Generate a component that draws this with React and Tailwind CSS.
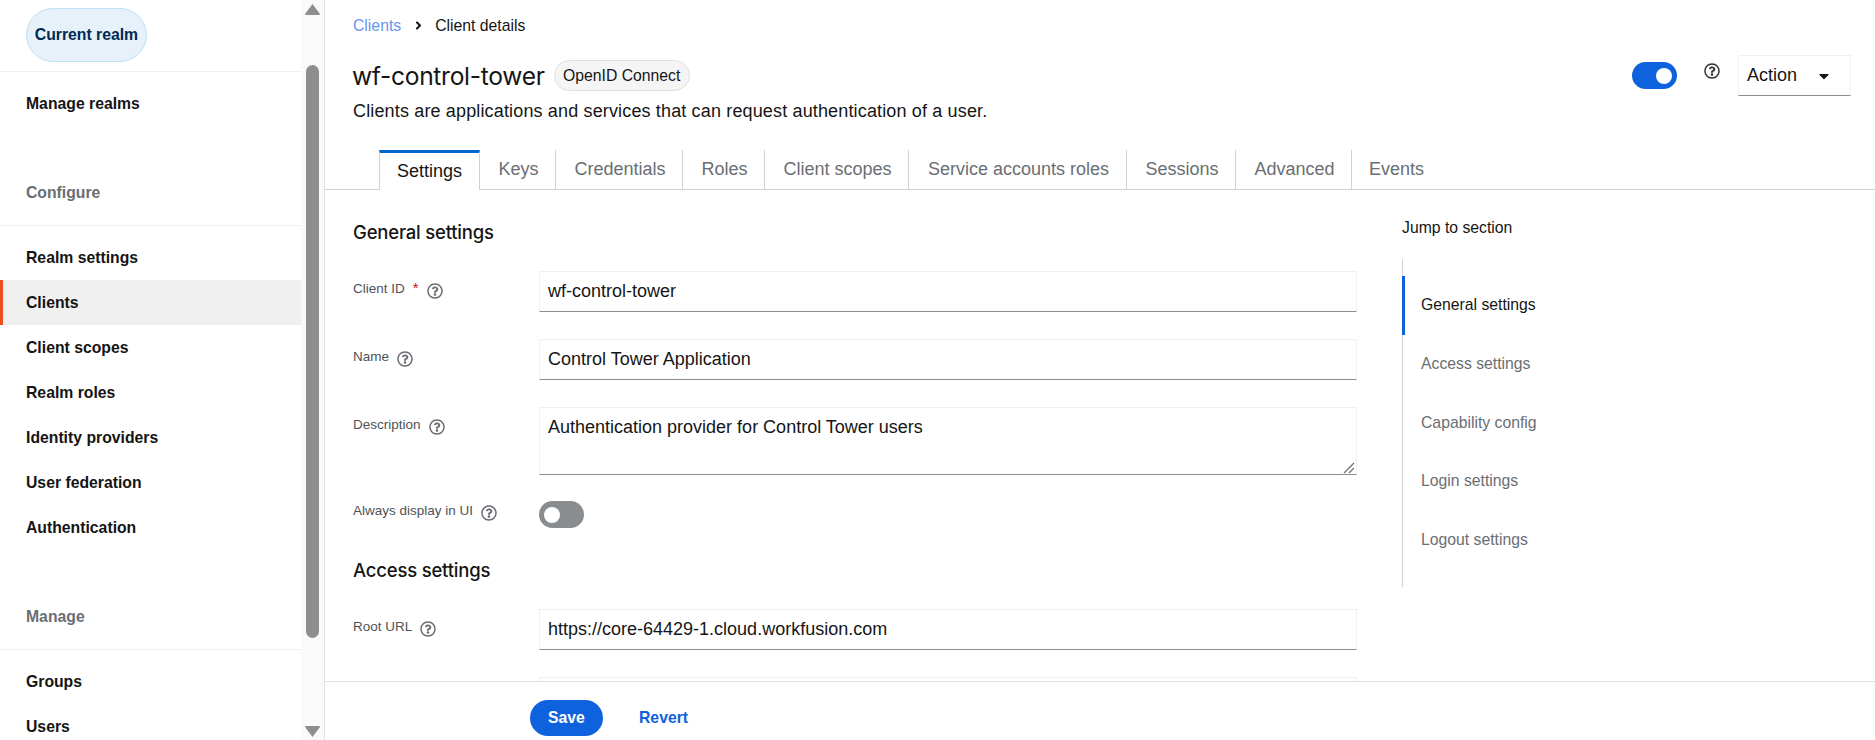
import React from "react";
import { FaRegQuestionCircle, FaAngleRight, FaCaretDown } from "react-icons/fa";

const sans = "font-['Liberation_Sans',Arial,sans-serif]";

const NavItem = ({ label, active }) => (
  <div
    className={`h-[45px] shrink-0 flex items-center text-[15.75px] font-bold text-[#151515] ${
      active ? "bg-[#f0f0f0] border-l-[3px] border-[#ee4d1c] pl-[23px]" : "pl-[26px]"
    }`}
  >
    {label}
  </div>
);

const NavHeading = ({ label }) => (
  <div className="shrink-0 pl-[26px] pb-[22px] leading-[20px] text-[15.75px] font-bold text-[#6a6e73] border-b border-[#f0f0f0]">
    {label}
  </div>
);

const Help = ({ className = "" }) => (
  <FaRegQuestionCircle className={`w-[16px] h-[16px] text-[#6a6e73] ${className}`} />
);

const Sidebar = () => (
  <div className="w-[325px] shrink-0 flex border-r border-[#e0e0e0] h-full overflow-hidden">
    <aside className="w-[301px] shrink-0 flex flex-col">
      <div className="h-[72px] shrink-0 pt-[8px] pl-[26px] border-b border-[#f0f0f0]">
        <div className="w-[121px] h-[54px] rounded-full border border-[#bee1f4] bg-[#e7f1fa] flex items-center justify-center text-[15.75px] font-bold text-[#002952]">
          Current realm
        </div>
      </div>
      <div className="h-[63px] shrink-0 flex items-center pl-[26px] text-[15.75px] font-bold text-[#151515]">
        Manage realms
      </div>
      <div className="h-[48px] shrink-0" />
      <NavHeading label="Configure" />
      <div className="h-[9px] shrink-0" />
      <NavItem label="Realm settings" />
      <NavItem label="Clients" active />
      <NavItem label="Client scopes" />
      <NavItem label="Realm roles" />
      <NavItem label="Identity providers" />
      <NavItem label="User federation" />
      <NavItem label="Authentication" />
      <div className="h-[57px] shrink-0" />
      <NavHeading label="Manage" />
      <div className="h-[9px] shrink-0" />
      <NavItem label="Groups" />
      <NavItem label="Users" />
    </aside>
    <div className="w-[23px] shrink-0 bg-[#fafafa] flex flex-col items-center">
      <svg width="15" height="11" viewBox="0 0 15 11" className="mt-[4px] shrink-0">
        <path d="M7.5 0 L15 10 Q15 11 14 11 L1 11 Q0 11 0 10 Z" fill="#8e8e8e" />
      </svg>
      <div className="w-[13px] h-[573px] mt-[50px] shrink-0 rounded-full bg-[#8e8e8e]" />
      <svg width="15" height="11" viewBox="0 0 15 11" className="mt-auto mb-[3px] shrink-0">
        <path d="M7.5 11 L15 1 Q15 0 14 0 L1 0 Q0 0 0 1 Z" fill="#8e8e8e" />
      </svg>
    </div>
  </div>
);

const tabs = [
  { label: "Settings", w: "w-[101px]", active: true },
  { label: "Keys", w: "w-[75px]" },
  { label: "Credentials", w: "w-[127px]" },
  { label: "Roles", w: "w-[82px]" },
  { label: "Client scopes", w: "w-[144px]" },
  { label: "Service accounts roles", w: "w-[218px]" },
  { label: "Sessions", w: "w-[109px]" },
  { label: "Advanced", w: "w-[116px]" },
  { label: "Events", w: "w-[88px]" },
];

const Tabs = () => (
  <div className="h-[40px] mt-[41px] pl-[54px] flex border-b border-[#d2d2d2] shrink-0">
    {tabs.map((t, i) =>
      t.active ? (
        <div
          key={t.label}
          className={`${t.w} h-[40px] flex items-center justify-center text-[18px] text-[#151515] bg-white border-t-[3px] border-t-[#0066cc] border-l border-r border-[#d2d2d2]`}
        >
          {t.label}
        </div>
      ) : (
        <div
          key={t.label}
          className={`${t.w} h-[39px] flex items-center justify-center pl-[2px] text-[18px] text-[#6a6e73] ${
            i > 1 ? "border-l border-[#d2d2d2]" : ""
          }`}
        >
          {t.label}
        </div>
      )
    )}
  </div>
);

const Field = ({ label, required, value, gap = "mb-[27px]", labelTop = "pt-[9px]", tall }) => (
  <div className={`flex ${gap}`}>
    <div className={`w-[186px] shrink-0 flex items-start gap-[9px] text-[13.5px] leading-[18px] text-[#4f5255] ${labelTop}`}>
      <span>{label}</span>
      {required && <span className="text-[#c9190b] -ml-[1px] text-[15px] leading-[16px]">*</span>}
      <Help className="mt-[3px] -ml-[1px]" />
    </div>
    <div
      className={`relative flex-1 ${tall ? "h-[68px] pt-[6px] items-start" : "h-[41px] items-center"} flex px-[8px] text-[18px] text-[#151515] border border-[#f0f0f0] border-b-[#8a8d90]`}
    >
      {value}
      {tall && (
        <svg width="12" height="12" viewBox="0 0 12 12" className="absolute right-[1px] bottom-0">
          <path d="M1 11 L11 1 M6 11 L11 6" stroke="#6a6e73" strokeWidth="1.2" />
        </svg>
      )}
    </div>
  </div>
);

const Heading = ({ children }) => (
  <h2 className="font-['Inter',sans-serif] text-[18.5px] font-medium text-[#151515] leading-[26px] tracking-[-0.2px]">
    {children}
  </h2>
);

const jump = ["General settings", "Access settings", "Capability config", "Login settings", "Logout settings"];

const JumpLinks = () => (
  <div className="w-[300px] ml-[45px] shrink-0 pt-[28px]">
    <div className="text-[15.75px] leading-[20px] text-[#151515] h-[41px]">Jump to section</div>
    <div className="border-l border-[#d2d2d2] w-full h-[328px] pt-[17px] flex flex-col">
      {jump.map((j, i) => (
        <div
          key={j}
          className={`h-[58.6px] shrink-0 flex items-center text-[15.75px] -ml-[1px] ${
            i === 0 ? "border-l-[3px] border-[#0f62de] pl-[16px] text-[#151515]" : "pl-[19px] text-[#6a6e73]"
          }`}
        >
          {j}
        </div>
      ))}
    </div>
  </div>
);

export default function App() {
  return (
    <div className={`${sans} w-[1875px] h-[740px] flex overflow-hidden bg-white`}>
      <Sidebar />
      <main className="flex-1 min-w-0 flex flex-col h-full">
        <div className="flex-1 min-h-0 overflow-hidden flex flex-col">
          <div className="pl-[28px] pt-[16px] flex items-center text-[15.75px] leading-[20px] h-[35px] shrink-0">
            <span className="text-[#6895f0]">Clients</span>
            <FaAngleRight className="w-[13px] h-[13px] ml-[11px] mr-[10px] text-[#151515]" />
            <span className="text-[#151515]">Client details</span>
          </div>
          <div className="pl-[28px] pr-[24px] flex justify-between shrink-0 h-[74px]">
            <div>
              <div className="flex items-start mt-[25px] h-[30px]">
                <h1 className="font-['Inter',sans-serif] text-[24.6px] leading-[34px] text-[#151515] tracking-[-0.3px] -mt-[1px] -ml-[1px]">
                  wf-control-tower
                </h1>
                <span className="ml-[9px] h-[31px] w-[136px] flex items-center justify-center rounded-full border border-[#e0e0e0] bg-[#f5f5f5] text-[15.75px] text-[#151515]">
                  OpenID Connect
                </span>
              </div>
              <p className="text-[18px] leading-[24px] text-[#151515] mt-[9px] whitespace-nowrap tracking-[0.15px]">
                Clients are applications and services that can request authentication of a user.
              </p>
            </div>
            <div className="flex items-start mt-[20px]">
              <div className="mt-[7px] w-[45px] h-[27px] rounded-full bg-[#0f62de] flex items-center justify-end pr-[5px]">
                <div className="w-[16px] h-[16px] rounded-full bg-white" />
              </div>
              <FaRegQuestionCircle className="w-[16px] h-[16px] ml-[27px] mt-[8px] text-[#333]" />
              <div className="ml-[18px] w-[113px] h-[41px] flex items-center justify-between pl-[8px] pr-[18px] text-[18px] text-[#151515] border border-[#f0f0f0] border-b-[#8a8d90]">
                Action
                <FaCaretDown className="w-[16px] h-[16px]" />
              </div>
            </div>
          </div>
          <Tabs />
          <div className="flex pl-[28px] flex-1 min-h-0">
            <div className="w-[1004px] shrink-0 pt-[29px]">
              <div className="mb-[26px]"><Heading>General settings</Heading></div>
              <Field label="Client ID" required value="wf-control-tower" />
              <Field label="Name" value="Control Tower Application" />
              <Field label="Description" value="Authentication provider for Control Tower users" tall gap="mb-[26px]" />
              <div className="flex mb-[29px]">
                <div className="w-[186px] shrink-0 flex items-start gap-[9px] text-[13.5px] leading-[18px] text-[#4f5255] pt-[1px]">
                  <span>Always display in UI</span>
                  <Help className="mt-[3px] -ml-[1px]" />
                </div>
                <div className="w-[45px] h-[27px] rounded-full bg-[#8a8d90] flex items-center pl-[5px]">
                  <div className="w-[16px] h-[16px] rounded-full bg-white" />
                </div>
              </div>
              <div className="mb-[26px]"><Heading>Access settings</Heading></div>
              <Field label="Root URL" value="https://core-64429-1.cloud.workfusion.com" />
              <div className="flex">
                <div className="w-[186px] shrink-0" />
                <div className="flex-1 h-[41px] border border-[#f0f0f0]" />
              </div>
            </div>
            <JumpLinks />
          </div>
        </div>
        <footer className="h-[59px] shrink-0 border-t border-[#e0e0e0] pl-[205px] flex items-start pt-[18px]">
          <button className="w-[73px] h-[36px] rounded-full bg-[#0f62de] text-white text-[15.75px] font-bold">Save</button>
          <button className="ml-[36px] h-[36px] text-[#0f62de] text-[15.75px] font-bold">Revert</button>
        </footer>
      </main>
    </div>
  );
}
